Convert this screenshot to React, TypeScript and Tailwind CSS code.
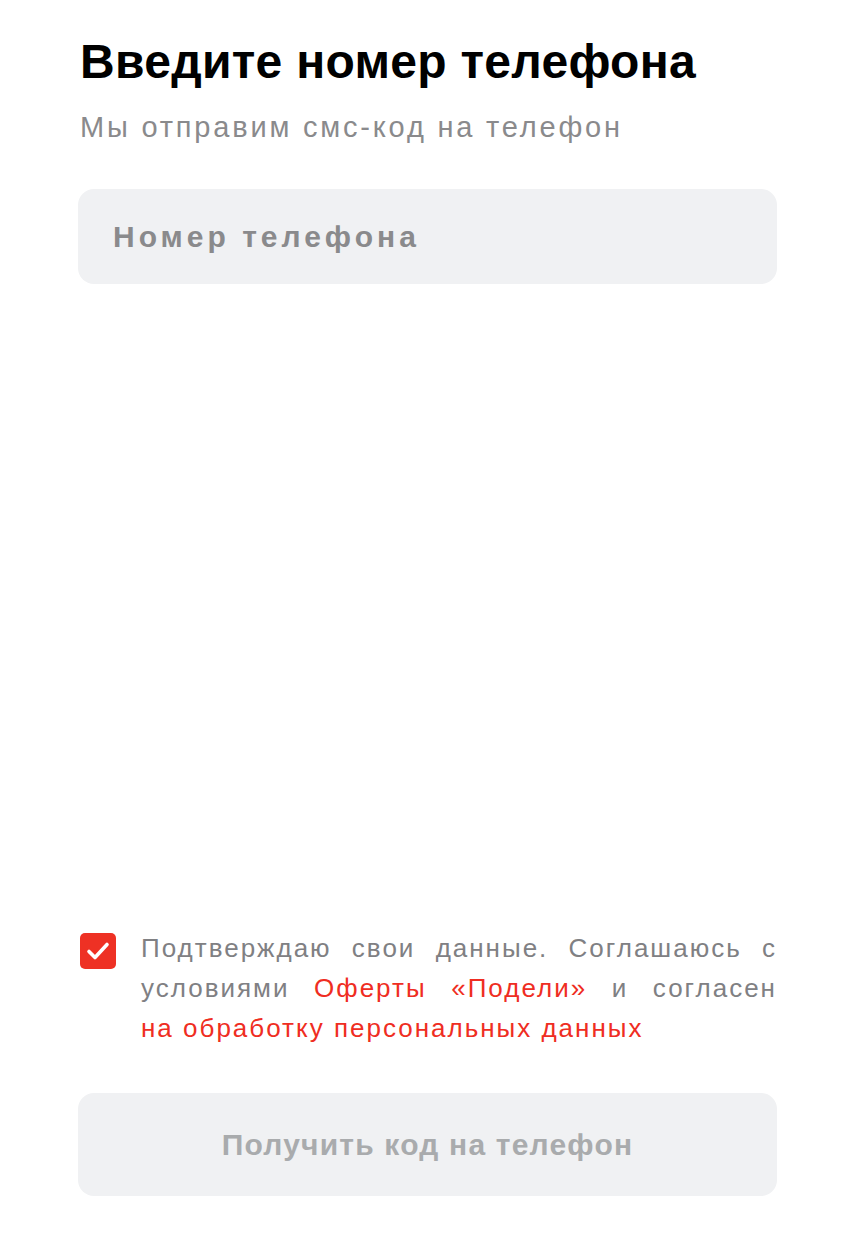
export default function App() {
    return (
        <div
            className="min-h-[1234px] w-full bg-white flex flex-col px-[78px] pt-[30px] pb-[38px]"
            style={{ fontFamily: '"Liberation Sans", Arial, sans-serif' }}
        >
            {/* Header */}
            <h1 className="text-[48px] leading-[64px] font-bold text-black tracking-[0.3px] pl-[2px]">
                Введите номер телефона
            </h1>
            <p className="mt-[15px] pl-[2px] text-[29px] leading-[36px] text-[#8a8a8c] tracking-[2.8px]">
                Мы отправим смс-код на телефон
            </p>

            {/* Phone input */}
            <div className="mt-[44px] h-[95px] rounded-[16px] bg-[#f0f1f3] flex items-center px-[35px]">
                <input
                    className="w-full bg-transparent outline-none text-[30px] font-bold tracking-[4px] text-black placeholder:text-[#8a8a8c]"
                    placeholder="Номер телефона"
                />
            </div>

            <div className="flex-1" />

            {/* Agreement */}
            <div className="flex items-start gap-[25px] pl-[2px]">
                <div className="mt-[5px] w-[36px] h-[36px] shrink-0 rounded-[5px] bg-[#ee3124] flex items-center justify-center">
                    <svg width="28" height="28" viewBox="0 0 28 28" fill="none">
                        <path
                            d="M5 14.5l6 6L23 7.5"
                            stroke="white"
                            strokeWidth="3.6"
                            strokeLinecap="round"
                            strokeLinejoin="round"
                        />
                    </svg>
                </div>
                <p className="text-[26px] leading-[40px] text-[#808083] text-justify tracking-[2px]">
                    Подтверждаю свои данные. Соглашаюсь с условиями{' '}
                    <span className="text-[#ef2d22] whitespace-nowrap">
                        Оферты «Подели»
                    </span>{' '}
                    и согласен{' '}
                    <span className="text-[#ef2d22] whitespace-nowrap">
                        на обработку персональных данных
                    </span>
                </p>
            </div>

            {/* Submit */}
            <button className="mt-[45px] h-[103px] rounded-[16px] bg-[#f0f1f3] text-[30px] font-bold text-[#a9abad] tracking-[1.2px]">
                Получить код на телефон
            </button>
        </div>
    );
}
